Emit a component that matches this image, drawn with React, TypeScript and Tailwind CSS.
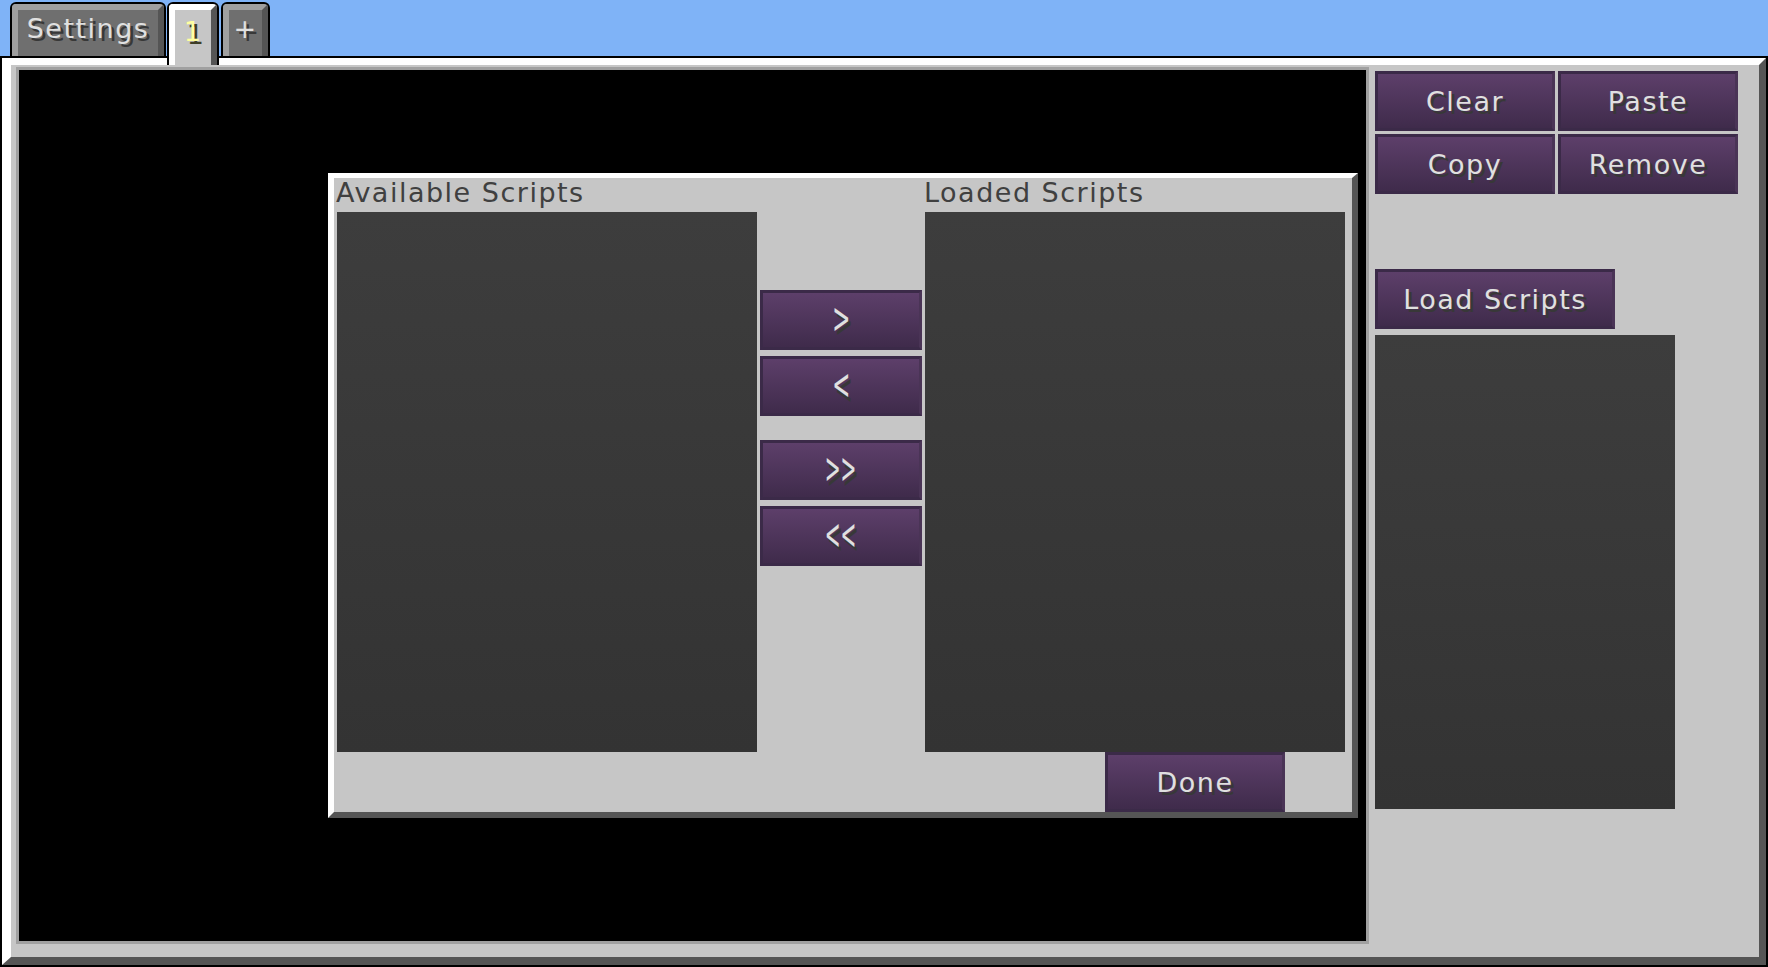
import React from 'react';

// Minecraft-style script manager screen

const McButton = ({ label, className = '', children }: { label?: string; className?: string; children?: React.ReactNode }) => {
    return (
        <div
            className={`flex items-center justify-center border-[3px] border-[#3b2a48] border-r-[#4a3456] bg-[linear-gradient(to_bottom,#5d3f6a,#3f2b4b)] text-[27px] leading-none text-[#e0e0e0] [text-shadow:3px_3px_0_#383838] ${className}`}
        >
            {children ?? label}
        </div>
    );
};

const Arrow = ({ glyph, narrow }: { glyph: string; narrow?: boolean }) => (
    <span className={`inline-block -translate-y-[3px] scale-y-[1.6] tracking-normal ${narrow ? 'scale-x-[0.7]' : 'scale-x-[0.8]'}`}>{glyph}</span>
);

const ListBox = ({ className = '' }: { className?: string }) => (
    <div className={`bg-[linear-gradient(to_bottom,#3d3d3d,#333333)] ${className}`} />
);

const Tab = ({ label, selected, className = '' }: { label: string; selected?: boolean; className?: string }) => {
    if (selected) {
        return (
            <div className={`relative z-10 -mb-[9px] h-[63px] rounded-t-[6px] bg-black px-[2px] pt-[2px] ${className}`}>
                <div className="flex h-full justify-center rounded-t-[4px] border-t-[6px] border-r-[6px] border-l-[6px] border-t-white border-r-[#555555] border-l-white bg-[#c6c6c6] pt-[8px] text-[27px] leading-none text-[#ffffa0] [text-shadow:3px_3px_0_#3f3f28]">
                    {label}
                </div>
            </div>
        );
    }
    return (
        <div className={`h-[54px] rounded-t-[6px] bg-black px-[2px] pt-[2px] ${className}`}>
            <div className="flex h-full justify-center rounded-t-[4px] border-t-[6px] border-r-[6px] border-l-[6px] border-t-[#a0a0a0] border-r-[#555555] border-l-[#a0a0a0] bg-[#6f6f6f] pt-[5px] text-[27px] leading-none text-[#e0e0e0] [text-shadow:3px_3px_0_#383838]">
                {label}
            </div>
        </div>
    );
};

const ScriptsDialog = () => {
    return (
        <div className="flex h-[645px] w-[1030px] flex-col border-t-[5px] border-r-[6px] border-b-[6px] border-l-[6px] border-t-white border-r-[#555555] border-b-[#555555] border-l-white bg-[#c6c6c6] pl-[3px]">
            <div className="flex">
                {/* Available */}
                <div className="flex w-[420px] flex-col">
                    <div className="-ml-[1px] h-[34px] pt-[1px] text-[27px] leading-none text-[#404040]">Available Scripts</div>
                    <ListBox className="h-[540px]" />
                </div>

                {/* Move buttons */}
                <div className="mx-[3px] flex w-[162px] flex-col pt-[112px]">
                    <McButton className="h-[60px]">
                        <Arrow glyph=">" />
                    </McButton>
                    <McButton className="mt-[6px] h-[60px]">
                        <Arrow glyph="<" />
                    </McButton>
                    <McButton className="mt-[24px] h-[60px]">
                        <Arrow glyph=">>" narrow />
                    </McButton>
                    <McButton className="mt-[6px] h-[60px]">
                        <Arrow glyph="<<" narrow />
                    </McButton>
                </div>

                {/* Loaded */}
                <div className="flex w-[420px] flex-col">
                    <div className="-ml-[1px] h-[34px] pt-[1px] text-[27px] leading-none text-[#404040]">Loaded Scripts</div>
                    <ListBox className="h-[540px]" />
                </div>
            </div>
            <McButton label="Done" className="ml-[768px] h-[60px] w-[180px]" />
        </div>
    );
};

export default function App() {
    return (
        <div className="flex h-[967px] w-[1768px] flex-col overflow-hidden bg-[#7fb3f7] tracking-[1.5px] [font-family:'DejaVu_Sans',sans-serif]">
            {/* Tabs */}
            <div className="flex h-[56px] items-end pl-[10px]">
                <Tab label="Settings" className="w-[156px]" />
                <Tab label="1" selected className="ml-[1px] w-[52px]" />
                <Tab label="+" className="ml-[2px] w-[49px]" />
            </div>

            {/* Main panel */}
            <div className="h-[911px] border-2 border-black">
                <div className="flex h-full border-t-[7px] border-r-[7px] border-b-[8px] border-l-[9px] border-t-white border-r-[#555555] border-b-[#555555] border-l-white bg-[#c6c6c6]">
                    {/* Canvas */}
                    <div className="mt-[2px] ml-[5px] h-[877px] w-[1353px] border-[3px] border-[#a0a0a0] bg-black pt-[103px] pl-[309px]">
                        <ScriptsDialog />
                    </div>

                    {/* Sidebar */}
                    <div className="ml-[6px] flex w-[363px] flex-col pt-[6px]">
                        <div className="grid grid-cols-2 gap-[3px]">
                            <McButton label="Clear" className="h-[60px]" />
                            <McButton label="Paste" className="h-[60px]" />
                            <McButton label="Copy" className="h-[60px]" />
                            <McButton label="Remove" className="h-[60px]" />
                        </div>
                        <McButton label="Load Scripts" className="mt-[75px] h-[60px] w-[240px]" />
                        <ListBox className="mt-[6px] h-[474px] w-[300px]" />
                    </div>
                </div>
            </div>
        </div>
    );
}
